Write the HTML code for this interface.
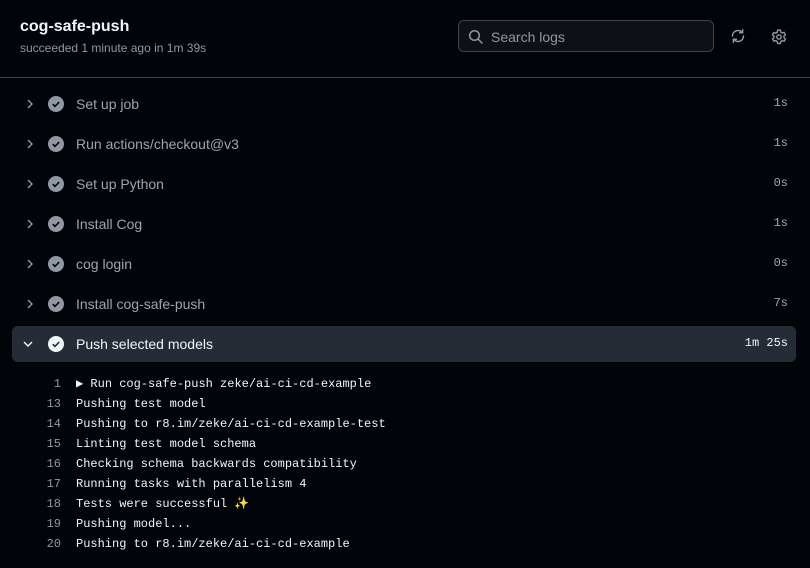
<!DOCTYPE html>
<html><head><style>
body{margin:0;width:810px;height:568px;background:#010409;font-family:"Liberation Sans",sans-serif;overflow:hidden;position:relative;color:#f0f6fc}
.t{position:absolute;left:20px;top:18px;font-size:16px;font-weight:bold}
.s{position:absolute;left:20px;top:41px;font-size:12px;color:#9198a1}
.search{position:absolute;left:458px;top:20px;width:256px;height:32px;border:1px solid #3d444d;border-radius:6px;background:#0d1117;box-sizing:border-box}
.search span{position:absolute;left:32px;top:8px;font-size:14px;color:#9198a1}
.hr{position:absolute;left:0;top:77px;width:810px;height:1px;background:#3d444d}
.row{position:absolute;left:12px;width:784px;height:36px;font-size:14px;color:#9ea5ae}
.row .n{position:absolute;left:64px;top:10px}
.row .d{position:absolute;right:8px;top:10px;font-family:"Liberation Mono",monospace;font-size:12px}
.row svg{position:absolute}
.sel{background:#262c36;border-radius:6px;color:#f0f6fc}
.log{position:absolute;left:0;top:374px;font-family:"Liberation Mono",monospace;font-size:12px;line-height:20px;color:#f0f6fc}
.log div{position:relative;height:20px}
.log b{font-weight:normal;position:absolute;right:-61px;color:#9198a1;text-align:right;width:40px}
.log .x{position:absolute;left:76px;white-space:pre}
</style></head><body>
<div class="t">cog-safe-push</div>
<div class="s">succeeded 1 minute ago in 1m 39s</div>
<div class="search"><svg style="position:absolute;left:9px;top:8px" width="16" height="16" viewBox="0 0 16 16"><circle cx="6.5" cy="6.5" r="4.8" fill="none" stroke="#9198a1" stroke-width="1.5"/><path d="M10 10l4 4" stroke="#9198a1" stroke-width="1.5" stroke-linecap="round"/></svg><span>Search logs</span></div>
<svg style="position:absolute;left:730px;top:28px" width="16" height="16" viewBox="0 0 16 16" fill="none" stroke="#9198a1" stroke-width="1.5" stroke-linecap="round"><path d="M2.5 8a5.5 5.5 0 0 1 9.8-3.4M13.5 8a5.5 5.5 0 0 1-9.8 3.4"/><path d="M12.6 1.8v3h-3M3.4 14.2v-3h3"/></svg>
<svg style="position:absolute;left:771px;top:29px" width="16" height="16" viewBox="0 0 16 16" fill="none" stroke="#9198a1" stroke-width="1.4"><path d="M6.6 1.2h2.8l.4 2 1.4.8 1.9-.7 1.4 2.4-1.5 1.3v1.6l1.5 1.3-1.4 2.4-1.9-.7-1.4.8-.4 2H6.6l-.4-2-1.4-.8-1.9.7-1.4-2.4 1.5-1.3V7.2L1.5 5.9l1.4-2.4 1.9.7 1.4-.8z"/><circle cx="8" cy="8" r="2.2"/></svg>
<div class="hr"></div>
<div class="row" style="top:86px"><svg style="left:12px;top:12px" width="12" height="12" viewBox="0 0 12 12"><path d="M4 2l4 4-4 4" fill="none" stroke="#9198a1" stroke-width="1.4"/></svg><svg style="left:36px;top:10px" width="16" height="16"><circle cx="8" cy="8" r="8" fill="#9198a1"/><path d="M4.8 8.2l2.2 2.2 4.2-4.4" fill="none" stroke="#010409" stroke-width="1.6"/></svg><span class="n">Set up job</span><span class="d">1s</span></div>
<div class="row" style="top:126px"><svg style="left:12px;top:12px" width="12" height="12" viewBox="0 0 12 12"><path d="M4 2l4 4-4 4" fill="none" stroke="#9198a1" stroke-width="1.4"/></svg><svg style="left:36px;top:10px" width="16" height="16"><circle cx="8" cy="8" r="8" fill="#9198a1"/><path d="M4.8 8.2l2.2 2.2 4.2-4.4" fill="none" stroke="#010409" stroke-width="1.6"/></svg><span class="n">Run actions/checkout@v3</span><span class="d">1s</span></div>
<div class="row" style="top:166px"><svg style="left:12px;top:12px" width="12" height="12" viewBox="0 0 12 12"><path d="M4 2l4 4-4 4" fill="none" stroke="#9198a1" stroke-width="1.4"/></svg><svg style="left:36px;top:10px" width="16" height="16"><circle cx="8" cy="8" r="8" fill="#9198a1"/><path d="M4.8 8.2l2.2 2.2 4.2-4.4" fill="none" stroke="#010409" stroke-width="1.6"/></svg><span class="n">Set up Python</span><span class="d">0s</span></div>
<div class="row" style="top:206px"><svg style="left:12px;top:12px" width="12" height="12" viewBox="0 0 12 12"><path d="M4 2l4 4-4 4" fill="none" stroke="#9198a1" stroke-width="1.4"/></svg><svg style="left:36px;top:10px" width="16" height="16"><circle cx="8" cy="8" r="8" fill="#9198a1"/><path d="M4.8 8.2l2.2 2.2 4.2-4.4" fill="none" stroke="#010409" stroke-width="1.6"/></svg><span class="n">Install Cog</span><span class="d">1s</span></div>
<div class="row" style="top:246px"><svg style="left:12px;top:12px" width="12" height="12" viewBox="0 0 12 12"><path d="M4 2l4 4-4 4" fill="none" stroke="#9198a1" stroke-width="1.4"/></svg><svg style="left:36px;top:10px" width="16" height="16"><circle cx="8" cy="8" r="8" fill="#9198a1"/><path d="M4.8 8.2l2.2 2.2 4.2-4.4" fill="none" stroke="#010409" stroke-width="1.6"/></svg><span class="n">cog login</span><span class="d">0s</span></div>
<div class="row" style="top:286px"><svg style="left:12px;top:12px" width="12" height="12" viewBox="0 0 12 12"><path d="M4 2l4 4-4 4" fill="none" stroke="#9198a1" stroke-width="1.4"/></svg><svg style="left:36px;top:10px" width="16" height="16"><circle cx="8" cy="8" r="8" fill="#9198a1"/><path d="M4.8 8.2l2.2 2.2 4.2-4.4" fill="none" stroke="#010409" stroke-width="1.6"/></svg><span class="n">Install cog-safe-push</span><span class="d">7s</span></div>
<div class="row sel" style="top:326px"><svg style="left:10px;top:12px" width="12" height="12" viewBox="0 0 12 12"><path d="M2 4l4 4 4-4" fill="none" stroke="#f0f6fc" stroke-width="1.4"/></svg><svg style="left:36px;top:10px" width="16" height="16"><circle cx="8" cy="8" r="8" fill="#f0f6fc"/><path d="M4.8 8.2l2.2 2.2 4.2-4.4" fill="none" stroke="#262c36" stroke-width="1.6"/></svg><span class="n">Push selected models</span><span class="d" style="color:#f0f6fc">1m 25s</span></div>
<div class="log">
<div><b>1</b><span class="x">▶ Run cog-safe-push zeke/ai-ci-cd-example</span></div>
<div><b>13</b><span class="x">Pushing test model</span></div>
<div><b>14</b><span class="x">Pushing to r8.im/zeke/ai-ci-cd-example-test</span></div>
<div><b>15</b><span class="x">Linting test model schema</span></div>
<div><b>16</b><span class="x">Checking schema backwards compatibility</span></div>
<div><b>17</b><span class="x">Running tasks with parallelism 4</span></div>
<div><b>18</b><span class="x">Tests were successful ✨</span></div>
<div><b>19</b><span class="x">Pushing model...</span></div>
<div><b>20</b><span class="x">Pushing to r8.im/zeke/ai-ci-cd-example</span></div>
</div>
</body></html>
